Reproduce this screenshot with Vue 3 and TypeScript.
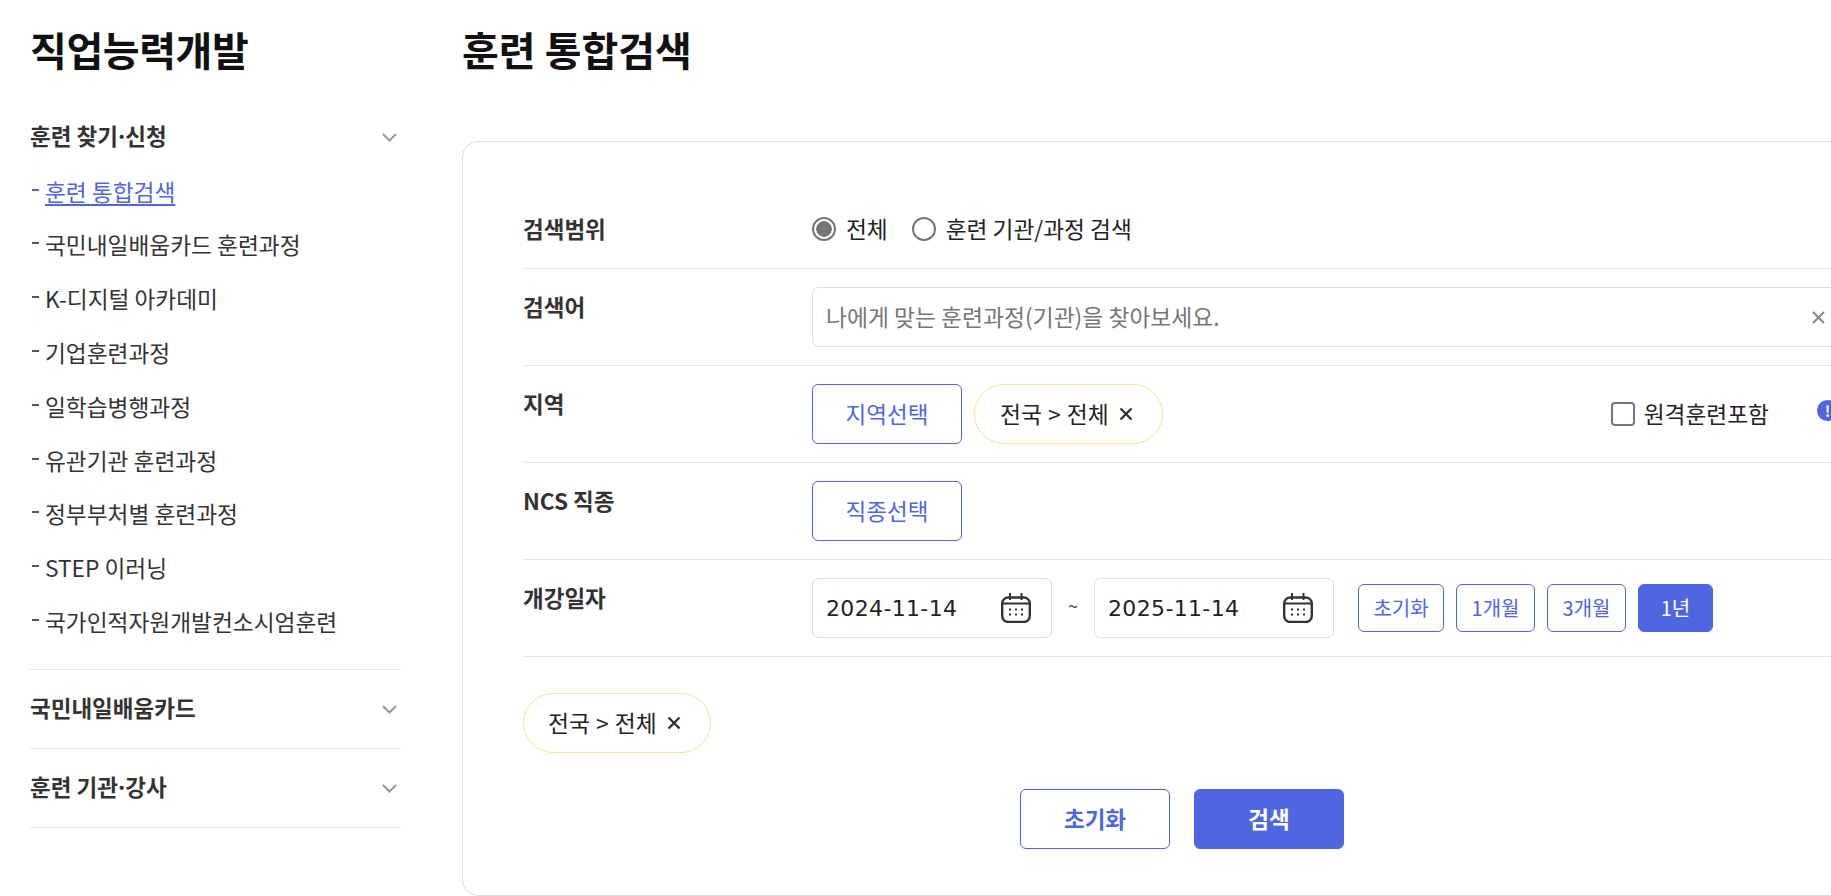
<script setup lang="ts">
const subMenu: string[] = [
  '훈련 통합검색',
  '국민내일배움카드 훈련과정',
  'K-디지털 아카데미',
  '기업훈련과정',
  '일학습병행과정',
  '유관기관 훈련과정',
  '정부부처별 훈련과정',
  'STEP 이러닝',
  '국가인적자원개발컨소시엄훈련',
]
const ranges: { label: string; w: string; on?: boolean }[] = [
  { label: '초기화', w: 'w86' },
  { label: '1개월', w: 'w79' },
  { label: '3개월', w: 'w79' },
  { label: '1년', w: 'w75', on: true },
]
const dates: string[] = ['2024-11-14', '2025-11-14']
</script>

<template>
  <div class="page">
    <aside class="side">
      <h2 class="side-title">직업능력개발</h2>
      <nav>
        <div class="acc open">
          <div class="acc-head">
            <span>훈련 찾기<span class="mid">·</span>신청</span>
            <svg class="chev" width="15" height="9" viewBox="0 0 15 9"><path d="M1 1l6.5 6.5L14 1" /></svg>
          </div>
          <ul class="sub">
            <li v-for="(m, i) in subMenu" :key="m" :class="{ active: i === 0 }">
              <a href="#" @click.prevent>{{ m }}</a>
            </li>
          </ul>
        </div>
        <div class="acc">
          <div class="acc-head">
            <span>국민내일배움카드</span>
            <svg class="chev" width="15" height="9" viewBox="0 0 15 9"><path d="M1 1l6.5 6.5L14 1" /></svg>
          </div>
        </div>
        <div class="acc">
          <div class="acc-head">
            <span>훈련 기관<span class="mid">·</span>강사</span>
            <svg class="chev" width="15" height="9" viewBox="0 0 15 9"><path d="M1 1l6.5 6.5L14 1" /></svg>
          </div>
        </div>
      </nav>
    </aside>

    <main class="main">
      <h1 class="title">훈련 통합검색</h1>
      <section class="card">
        <div class="row first">
          <div class="label">검색범위</div>
          <div class="field radios">
            <label class="radio"><span class="dot on"></span><span class="up">전체</span></label>
            <label class="radio"><span class="dot"></span><span class="up">훈련 기관/과정 검색</span></label>
          </div>
        </div>
        <div class="row">
          <div class="label">검색어</div>
          <div class="field">
            <div class="search">
              <input type="text" placeholder="나에게 맞는 훈련과정(기관)을 찾아보세요." />
              <svg class="clear" width="13" height="13" viewBox="0 0 13 13"><path d="M1 1l11 11M12 1L1 12" /></svg>
            </div>
          </div>
        </div>
        <div class="row">
          <div class="label">지역</div>
          <div class="field">
            <button class="outline pick" type="button">지역선택</button>
            <span class="tag"><span class="up">전국 &gt; 전체</span><svg class="x" width="14" height="14" viewBox="0 0 14 14"><path d="M1.5 1.5l11 11M12.5 1.5l-11 11" /></svg></span>
            <label class="check"><span class="box"></span><span class="up">원격훈련포함</span></label>
            <span class="info">!</span>
          </div>
        </div>
        <div class="row">
          <div class="label">NCS 직종</div>
          <div class="field">
            <button class="outline pick" type="button">직종선택</button>
          </div>
        </div>
        <div class="row">
          <div class="label">개강일자</div>
          <div class="field">
            <template v-for="(d, i) in dates" :key="d">
              <span v-if="i === 1" class="tilde">~</span>
              <div class="date">
                <span>{{ d }}</span>
                <svg width="30" height="30" viewBox="0 0 30 30" fill="none">
                  <rect x="1.2" y="4.5" width="27.6" height="24.5" rx="6" stroke="#333" stroke-width="2.4" />
                  <path d="M9 0v7M20.5 0v7M1.5 10.5h27" stroke="#333" stroke-width="2" />
                  <g fill="#333">
                    <rect x="8" y="15.5" width="2" height="2" /><rect x="14" y="15.5" width="2" height="2" /><rect x="20" y="15.5" width="2" height="2" />
                    <rect x="8" y="20.5" width="2" height="2" /><rect x="14" y="20.5" width="2" height="2" /><rect x="20" y="20.5" width="2" height="2" />
                  </g>
                </svg>
              </div>
            </template>
            <div class="ranges">
              <button v-for="r in ranges" :key="r.label" type="button" class="range" :class="[r.w, { on: r.on }]">{{ r.label }}</button>
            </div>
          </div>
        </div>
        <div class="chosen">
          <span class="tag"><span class="up">전국 &gt; 전체</span><svg class="x" width="14" height="14" viewBox="0 0 14 14"><path d="M1.5 1.5l11 11M12.5 1.5l-11 11" /></svg></span>
        </div>
        <div class="actions">
          <button class="act reset" type="button">초기화</button>
          <button class="act go" type="button">검색</button>
        </div>
      </section>
    </main>
  </div>
</template>

<style>
html, body { margin: 0; overflow: hidden; background: #fff; }
</style>

<style scoped>
.page {
  display: flex;
  width: 1831px;
  height: 896px;
  overflow: hidden;
  font-family: "Noto Sans CJK KR", "Noto Sans", sans-serif;
  color: #222;
  background: #fff;
}
.side { flex: none; width: 371px; margin-left: 30px; }
.side-title {
  margin: 0;
  height: 98px;
  padding-top: 19px;
  box-sizing: border-box;
  font-size: 40px;
  line-height: 60px;
  font-weight: 700;
  letter-spacing: -0.4px;
  color: #111;
}
.acc { border-bottom: 1px solid #e6e6e6; }
.acc.open { padding-bottom: 20px; }
.acc-head {
  display: flex;
  align-items: center;
  justify-content: space-between;
  box-sizing: border-box;
  height: 78px;
  font-size: 22.5px;
  font-weight: 700;
  color: #333;
  padding: 0 4px 3px 0;
}
.acc.open .acc-head { height: 66.6px; padding: 22px 4px 14.6px 0; }
.mid { margin: 0 -3px; }
.chev { position: relative; top: 2px; fill: none; stroke: #999; stroke-width: 2; }
.sub { list-style: none; margin: 0; padding: 0; }
.sub li {
  position: relative;
  height: 53.8px;
  line-height: 53px;
  padding-left: 15px;
  font-size: 22.7px;
  color: #333;
}
.sub li::before {
  content: "";
  position: absolute;
  left: 2px;
  top: 24px;
  width: 7px;
  height: 2px;
  background: #555;
}
.sub a { color: inherit; text-decoration: none; }
.sub li.active { color: #4f66e1; }
.sub li.active::before { background: #4f66e1; }
.sub li.active a {
  text-decoration: underline;
  text-decoration-thickness: 2px;
  text-underline-offset: 3px;
}

.main { flex: none; margin-left: 61px; width: 1440px; }
.title {
  margin: 0;
  height: 141px;
  padding-top: 19px;
  box-sizing: border-box;
  font-size: 40px;
  line-height: 60px;
  font-weight: 700;
  color: #111;
}
.card {
  box-sizing: border-box;
  height: 755px;
  padding: 0 60px;
  border: 1px solid #dedede;
  border-radius: 16px;
}
.row {
  display: flex;
  box-sizing: border-box;
  height: 97px;
  padding: 18px 0;
  border-bottom: 1px solid #e6e6e6;
}
.row.first { height: 127px; padding-top: 66px; }
.label {
  flex: none;
  width: 289px;
  font-size: 22.5px;
  line-height: 39px;
  font-weight: 700;
  color: #333;
}
.first .label { line-height: 40px; }
.field { flex: 1; min-width: 0; display: flex; align-items: center; }
.radios { gap: 24px; height: 42px; }
.radio {
  display: flex;
  align-items: center;
  gap: 10px;
  font-size: 22.7px;
  color: #222;
}
.up { position: relative; top: -1px; }
.dot {
  box-sizing: border-box;
  width: 24px;
  height: 24px;
  border: 2px solid #767676;
  border-radius: 50%;
  background: #fff;
}
.dot.on { background: radial-gradient(circle, #767676 0 7.5px, #fff 8px); }
.search { position: relative; width: 100%; }
.search input {
  display: block;
  box-sizing: border-box;
  width: 100%;
  height: 60px;
  padding: 0 48px 2px 13px;
  border: 1px solid #dedede;
  border-radius: 6px;
  font: inherit;
  font-size: 22.8px;
  color: #222;
  outline: none;
}
.search input::placeholder { color: #767676; opacity: 1; }
.clear {
  position: absolute;
  right: 16px;
  top: 24px;
  fill: none;
  stroke: #888;
  stroke-width: 2;
}
button { font-family: inherit; cursor: pointer; background: #fff; }
.outline {
  box-sizing: border-box;
  border: 1px solid #4f66e1;
  border-radius: 6px;
  color: #4f66e1;
}
.pick { width: 150px; height: 60px; font-size: 22.5px; padding: 0 0 2px; }
.tag {
  display: inline-flex;
  align-items: center;
  box-sizing: border-box;
  width: 188px;
  height: 60px;
  padding-left: 24px;
  border: 1px solid #f5e68f;
  border-radius: 30px;
  font-size: 22.8px;
  word-spacing: 1px;
  color: #222;
}
.x { margin-left: 10px; fill: none; stroke: #333; stroke-width: 2.4; }
.field .tag { margin-left: 12px; width: 189px; padding-left: 25px; }
.check {
  display: flex;
  align-items: center;
  gap: 9px;
  margin-left: auto;
  font-size: 22.7px;
}
.box {
  box-sizing: border-box;
  width: 24px;
  height: 24px;
  border: 2px solid #767676;
  border-radius: 4px;
}
.info {
  flex: none;
  width: 21px;
  height: 21px;
  margin: 0 3px 8px 48px;
  border-radius: 50%;
  background: #4f66e1;
  color: #fff;
  font-size: 15px;
  font-weight: 700;
  line-height: 21px;
  text-align: center;
}
.tilde { width: 42px; text-align: center; font-size: 18px; color: #444; padding-bottom: 7px; }
.date {
  display: flex;
  align-items: center;
  justify-content: space-between;
  box-sizing: border-box;
  width: 240px;
  height: 60px;
  padding: 0 20px 0 13px;
  border: 1px solid #dedede;
  border-radius: 6px;
  font-family: "DejaVu Sans", sans-serif;
  font-size: 22px;
  letter-spacing: 0.35px;
  color: #222;
}
.ranges { display: flex; gap: 12px; margin-left: 24px; }
.range {
  box-sizing: border-box;
  height: 48px;
  padding: 0 0 1px;
  border: 1px solid #4f66e1;
  border-radius: 6px;
  font-size: 20px;
  color: #4f66e1;
}
.w86 { width: 86px; }
.w79 { width: 79px; }
.w75 { width: 75px; }
.range.on { background: #4f66e1; color: #fff; }
.chosen { padding-top: 36px; }
.actions { display: flex; justify-content: center; gap: 24px; margin-top: 36px; }
.act {
  box-sizing: border-box;
  width: 150px;
  height: 60px;
  padding: 0 0 2px;
  border: 1px solid #4f66e1;
  border-radius: 6px;
  font-size: 22.5px;
  font-weight: 700;
}
.reset { color: #4f66e1; background: #fff; }
.go { color: #fff; background: #4f66e1; }
</style>
